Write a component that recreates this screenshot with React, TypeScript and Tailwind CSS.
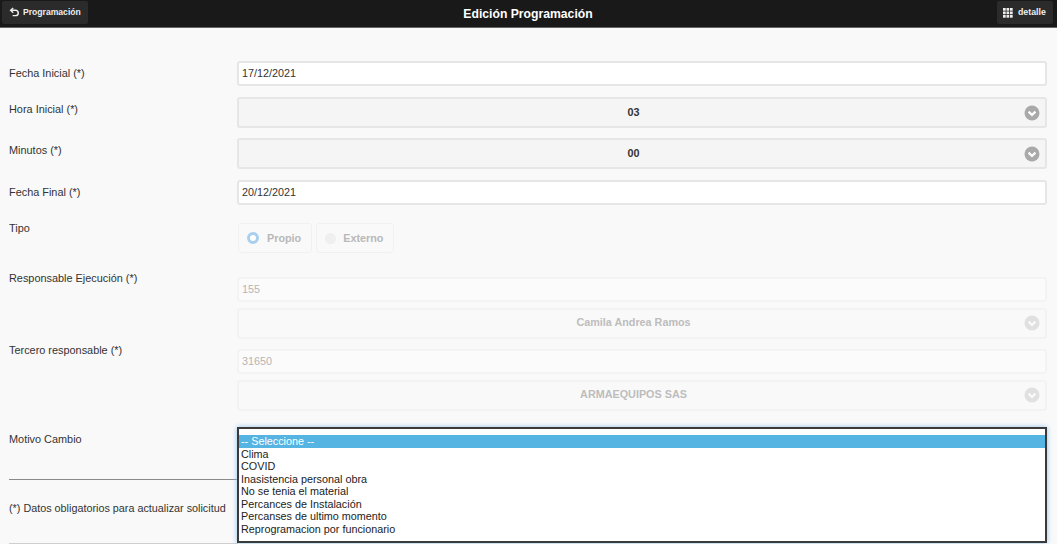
import React from "react";

const font = { fontFamily: '"Liberation Sans", Arial, sans-serif' };

function Chevron({ dim = false }: { dim?: boolean }) {
  return (
    <svg width="16" height="16" viewBox="0 0 16 16" className={dim ? "opacity-30" : ""}>
      <circle cx="8" cy="8" r="7.5" fill="#a9a9a9" />
      <path d="M4.6 6.6 8 10l3.4-3.4" fill="none" stroke="#fff" strokeWidth="2.2" />
    </svg>
  );
}

function Label({ children, className = "" }: { children: React.ReactNode; className?: string }) {
  return <div className={`w-[237px] shrink-0 pl-[9px] text-[10.9px] leading-[14px] text-[#333] ${className}`}>{children}</div>;
}

function TextBox({ value, dim = false }: { value: string; dim?: boolean }) {
  return (
    <div className={`w-[810px] h-[25px] flex items-center pl-[3px] pb-px rounded-[3px] border-2 text-[10.8px] ${dim ? "bg-[#fbfbfb] border-[#f3f3f3] text-[#b5b5b5]" : "bg-white border-[#e6e6e6] text-[#333]"}`}>
      {value}
    </div>
  );
}

function SelectBox({ value, dim = false }: { value: string; dim?: boolean }) {
  return (
    <div className={`w-[810px] h-[31px] flex items-center pl-[6px] pr-[5px] rounded-[3px] border-2 text-[10.8px] font-bold ${dim ? "pb-[2px] bg-[#f9f9f9] border-[#f3f3f3] text-[#bdbdbd]" : "bg-[#f5f5f5] border-[#e6e6e6] text-[#333]"}`}>
      <span className="flex-1 text-center pr-[2px]">{value}</span>
      <Chevron dim={dim} />
    </div>
  );
}

function Radio({ label, on = false }: { label: string; on?: boolean }) {
  return (
    <div className={`h-[30px] flex items-center pl-[8px] pr-[10px] rounded-[3px] border border-[#f1f1f1] bg-[#f9f9f9] text-[10.8px] font-bold text-[#b8b8b8] ${on ? "gap-[8px]" : "gap-[7px]"}`}>
      {on ? (
        <span className="w-[12px] h-[12px] rounded-full border-[3px] border-[#a8d0ee] bg-white" />
      ) : (
        <span className="w-[11px] h-[11px] rounded-full bg-[#efefef]" />
      )}
      {label}
    </div>
  );
}

const options = [
  "Clima",
  "COVID",
  "Inasistencia personal obra",
  "No se tenia el material",
  "Percances de Instalación",
  "Percanses de ultimo momento",
  "Reprogramacion por funcionario",
];

export default function App() {
  return (
    <div style={font} className="w-[1057px] h-[544px] overflow-hidden bg-[#f9f9f9]">
      <header className="h-[28px] bg-[#191919] border-b border-[#666] flex items-start pt-px pl-[2px] pr-[4px]">
        <div className="h-[23px] w-[86px] rounded-[2px] bg-[#2b2b2b] flex items-center gap-[3px] pl-[7px] text-[8.6px] font-bold text-[#eee]">
          <svg width="11" height="11" viewBox="0 0 12 12" fill="none" stroke="#eee" strokeWidth="1.6">
            <path d="M2.2 3.6h5a2.8 2.8 0 0 1 0 5.8H4" />
            <path d="M4.6 1 1.8 3.6l2.8 2.6" />
          </svg>
          Programación
        </div>
        <div className="flex-1 text-center pr-[29px] pt-[6px] text-[12.2px] leading-[14px] font-bold text-white">Edición Programación</div>
        <div className="h-[23px] w-[56px] rounded-[2px] bg-[#2b2b2b] flex items-center gap-[5px] pl-[6px] text-[8.8px] font-bold text-[#eee]">
          <svg width="10" height="10" viewBox="0 0 10 10" fill="#eee">
            {[0, 3.5, 7].map((y) =>
              [0, 3.5, 7].map((x) => <rect key={`${x}-${y}`} x={x} y={y} width="2.7" height="2.7" />)
            )}
          </svg>
          detalle
        </div>
      </header>

      <main className="pt-[33px]">
        <div className="flex h-[25px]">
          <Label className="pt-[5px]">Fecha Inicial (*)</Label>
          <TextBox value="17/12/2021" />
        </div>
        <div className="flex mt-[11px]">
          <Label className="pt-[5px]">Hora Inicial (*)</Label>
          <SelectBox value="03" />
        </div>
        <div className="flex mt-[10px]">
          <Label className="pt-[5px]">Minutos (*)</Label>
          <SelectBox value="00" />
        </div>
        <div className="flex mt-[11px]">
          <Label className="pt-[5px]">Fecha Final (*)</Label>
          <TextBox value="20/12/2021" />
        </div>
        <div className="flex mt-[18px]">
          <Label className="-mt-[2px]">Tipo</Label>
          <div className="flex gap-[4px] pl-px">
            <Radio label="Propio" on />
            <Radio label="Externo" />
          </div>
        </div>
        <div className="flex mt-[24px]">
          <Label className="-mt-[6px]">Responsable Ejecución (*)</Label>
          <div className="flex flex-col gap-[6px]">
            <TextBox value="155" dim />
            <SelectBox value="Camila Andrea Ramos" dim />
          </div>
        </div>
        <div className="flex mt-[10px]">
          <Label className="-mt-[6px]">Tercero responsable (*)</Label>
          <div className="flex flex-col gap-[6px]">
            <TextBox value="31650" dim />
            <SelectBox value="ARMAEQUIPOS SAS" dim />
          </div>
        </div>
        <div className="flex mt-[16px]">
          <div className="w-[238px] shrink-0 flex flex-col -mr-px">
            <Label className="pt-[5px]">Motivo Cambio</Label>
            <div className="ml-[9px] mt-[33px] h-px bg-[#8a8a8a]" />
            <div className="pl-[9px] mt-[21px] text-[10.8px] leading-[14px] text-[#333]">(*) Datos obligatorios para actualizar solicitud</div>
            <div className="ml-[9px] mt-[28px] h-px bg-[#cfcfcf]" />
          </div>
          <div className="relative w-[810px] h-[116px] bg-white border-2 border-[#3a3a3a] shadow-[0_0_5px_#8fc4ea] pt-[6px] text-[10.8px] leading-[12.5px] text-[#222]">
            <div className="bg-[#56b4e3] text-white pl-[2px]">-- Seleccione --</div>
            {options.map((o) => (
              <div key={o} className="pl-[2px]">{o}</div>
            ))}
          </div>
        </div>
      </main>
    </div>
  );
}
